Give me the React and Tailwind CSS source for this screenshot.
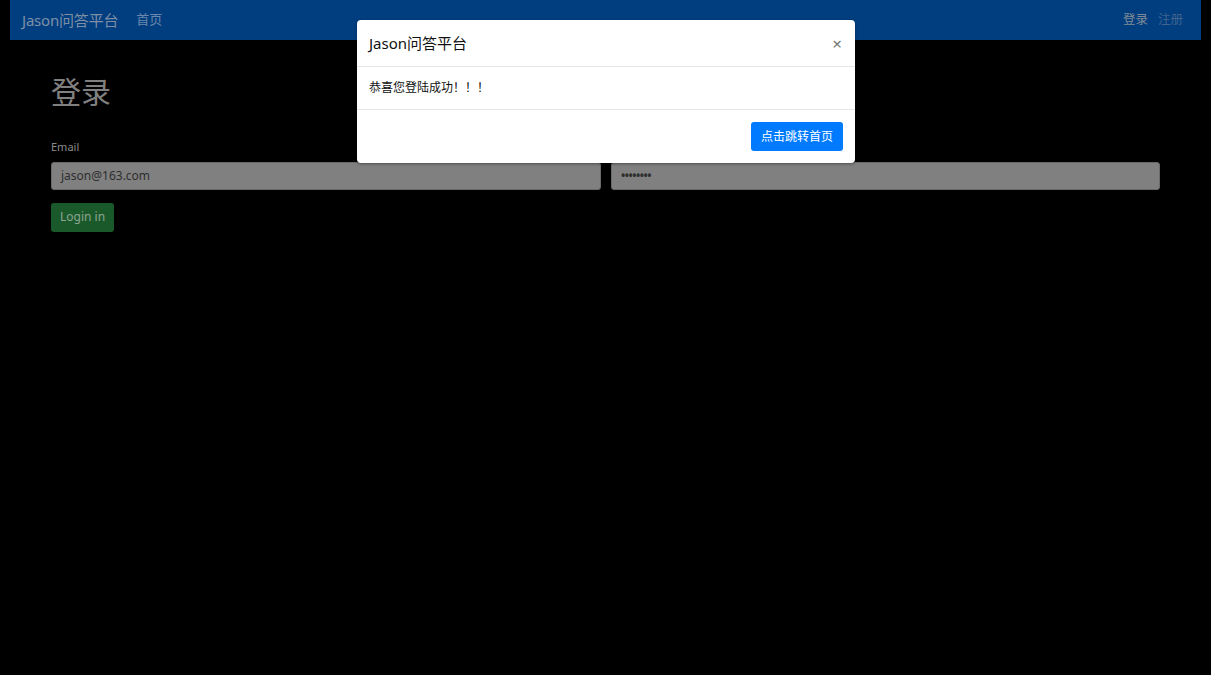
import React from 'react';

const font = { fontFamily: '"Noto Sans", "Noto Sans CJK SC", sans-serif' };

const App = () => {
  return (
    <div className="relative min-h-[675px] w-full bg-black" style={font}>
      <nav className="mx-[10px] flex h-10 items-center bg-[#003e80] px-3">
        <span className="text-[15px] tracking-[-0.2px] text-[#7f8fa6]">Jason问答平台</span>
        <span className="ml-[18px] text-[13px] text-[#6a87ab]">首页</span>
        <div className="ml-auto flex gap-[10px] text-[12.5px]">
          <span className="text-[#808a96]">登录</span>
          <span className="mr-[6px] text-[#40648e]">注册</span>
        </div>
      </nav>

      <div className="px-[51px] pt-[37px]">
        <h2 className="text-[30px] leading-none text-[#808080]">登录</h2>
        <div className="mt-[32px] grid grid-cols-2 gap-[10px]">
          <div>
            <label className="block text-[11px] text-[#8a8a8a]">Email</label>
            <div className="mt-[6px] flex h-[28px] items-center rounded-[3px] border border-[#6a6a6a] bg-[#808080] px-[9px] text-[12px] text-[#2e2e2e]">
              jason@163.com
            </div>
          </div>
          <div>
            <label className="block text-[11px] text-[#8a8a8a]">Password</label>
            <div className="mt-[6px] flex h-[28px] items-center rounded-[3px] border border-[#6a6a6a] bg-[#808080] px-[9px] text-[14px] tracking-[-1.5px] text-[#2e2e2e]">
              ••••••••
            </div>
          </div>
        </div>
        <button className="mt-[13px] h-[29px] rounded-[3px] bg-[#1a5a2a] px-[9px] text-[12px] text-[#8ca493]">
          Login in
        </button>
      </div>

      <div className="absolute left-[357px] top-[20px] w-[498px] rounded-[4px] bg-white shadow-[0_1px_3px_rgba(0,0,0,0.4)]">
        <div className="flex h-[47px] items-center justify-between border-b border-[#e6e6e6] pl-[12px] pr-[13px]">
          <span className="text-[15px] text-[#111]">Jason问答平台</span>
          <span className="text-[17px] leading-none text-[#777]">×</span>
        </div>
        <div className="flex h-[43px] items-center border-b border-[#e6e6e6] px-[12px] text-[12px] text-[#111]">
          恭喜您登陆成功！！！
        </div>
        <div className="flex h-[53px] items-center justify-end pr-[12px]">
          <button className="h-[29px] rounded-[3px] bg-[#007bff] px-[10px] text-[12px] text-white">
            点击跳转首页
          </button>
        </div>
      </div>
    </div>
  );
};

export default App;
